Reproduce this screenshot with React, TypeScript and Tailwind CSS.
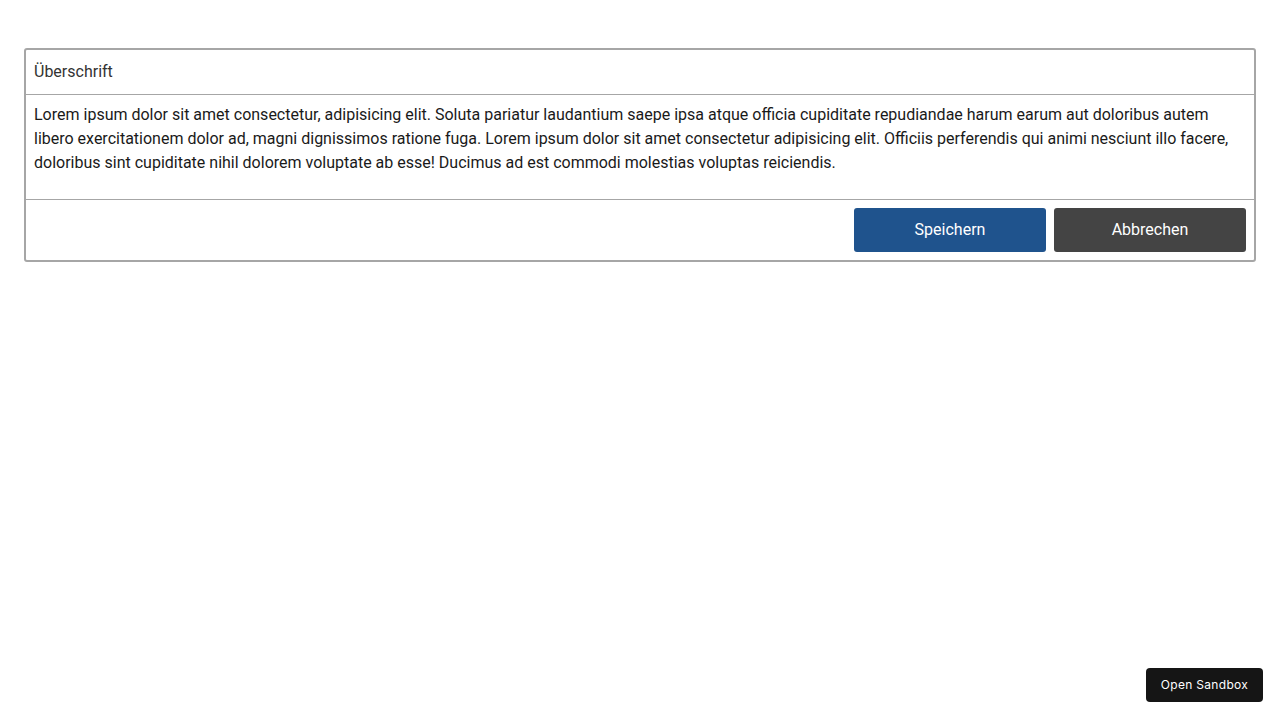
export default function App() {
  return (
    <div className="min-h-screen bg-white px-6 pt-12 font-['Roboto',sans-serif]">
      <div className="rounded-[3px] border-2 border-[#a6a6a6]">
        <div className="flex h-[45px] items-center border-b border-[#a6a6a6] px-2 text-[16px] text-[#333]">
          Überschrift
        </div>
        <div className="border-b border-[#a6a6a6] px-2 pt-2 pb-6 text-[16px] leading-6 text-[#1a1a1a]">
          Lorem ipsum dolor sit amet consectetur, adipisicing elit. Soluta
          pariatur laudantium saepe ipsa atque officia cupiditate repudiandae
          harum earum aut doloribus autem libero exercitationem dolor ad, magni
          dignissimos ratione fuga. Lorem ipsum dolor sit amet consectetur
          adipisicing elit. Officiis perferendis qui animi nesciunt illo facere,
          doloribus sint cupiditate nihil dolorem voluptate ab esse! Ducimus ad
          est commodi molestias voluptas reiciendis.
        </div>
        <div className="flex justify-end gap-2 p-2">
          <button className="h-11 w-48 rounded-[3px] bg-[#1f538d] text-[16px] text-white">
            Speichern
          </button>
          <button className="h-11 w-48 rounded-[3px] bg-[#444444] text-[16px] text-white">
            Abbrechen
          </button>
        </div>
      </div>
      <button className="fixed right-[17px] bottom-[18px] h-[34px] w-[117px] rounded-[4px] bg-[#151515] text-center font-['Inter',sans-serif] text-[12px] tracking-[0.3px] text-white">
        Open Sandbox
      </button>
    </div>
  );
}
